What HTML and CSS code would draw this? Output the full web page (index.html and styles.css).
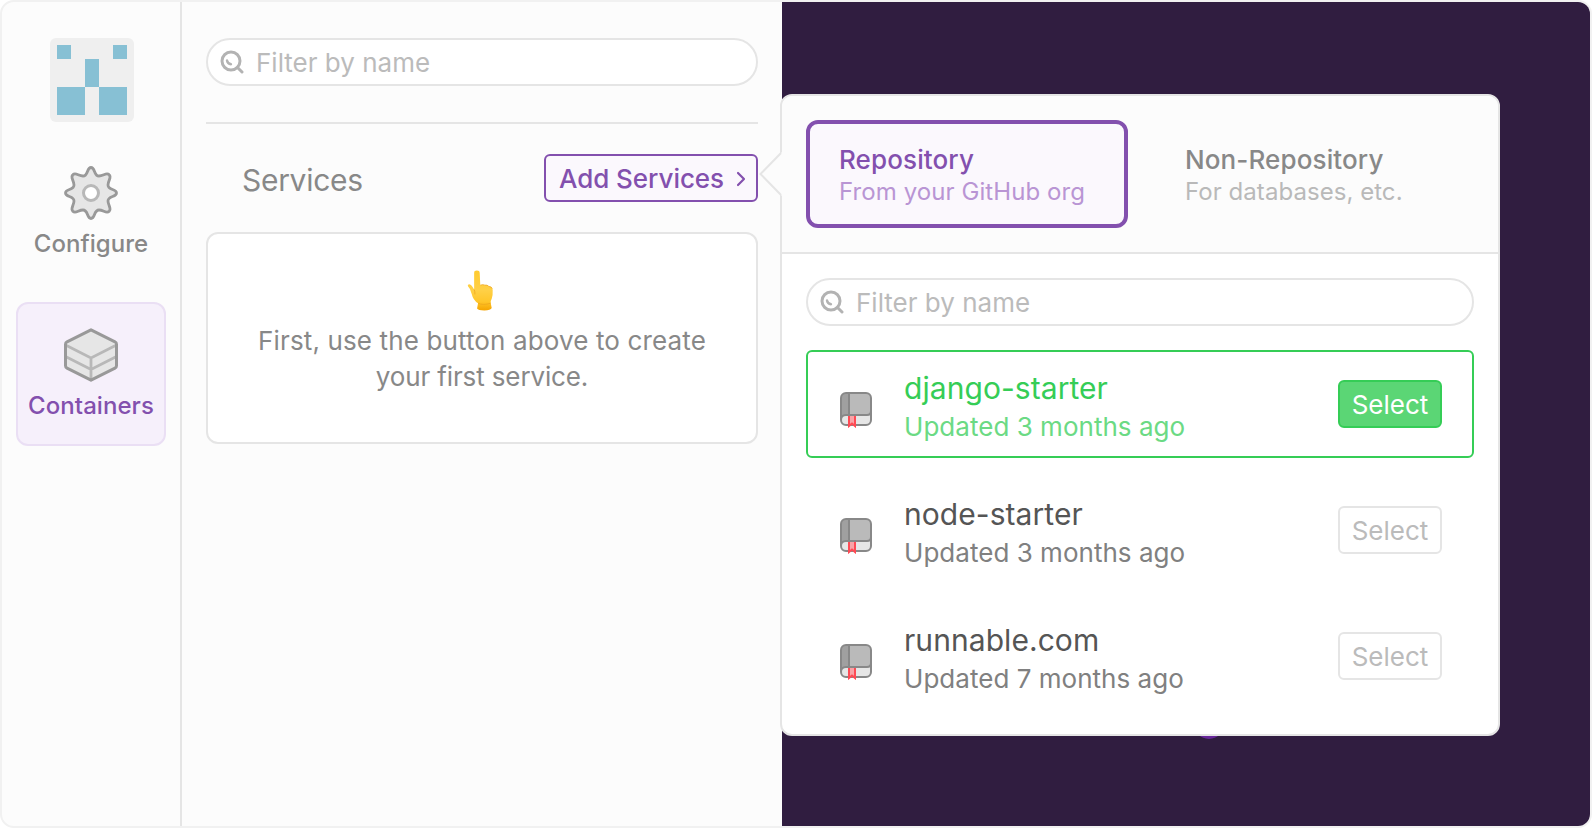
FILE: index.html
```html
<!DOCTYPE html>
<html lang="en">
<head>
<meta charset="utf-8">
<title>Containers</title>
<link rel="stylesheet" href="styles.css">
</head>
<body>
<svg class="defs" width="0" height="0" aria-hidden="true">
  <symbol id="search" viewBox="0 0 24 24">
    <circle cx="11" cy="11" r="9" fill="none" stroke="#b3b3b3" stroke-width="3"/>
    <path d="M17.5 17.5 22 22" fill="none" stroke="#b3b3b3" stroke-width="3" stroke-linecap="round"/>
    <path d="M7 10.5Q7.500 13.800 11 14.200" fill="none" stroke="#b3b3b3" stroke-width="2.400" stroke-linecap="round"/>
  </symbol>
  <symbol id="book" viewBox="0 0 32 36">
    <path d="M1 6a5 5 0 0 1 5-5h20a5 5 0 0 1 5 5v22a5 5 0 0 1-5 5H6a5 5 0 0 1-5-5z" fill="#e6e6e6"/>
    <path d="M1 28V6a5 5 0 0 1 5-5h3v22H6q-5 0-5 5z" fill="#a0a0a0"/>
    <path d="M9 1h17a5 5 0 0 1 5 5v13q0 4-4 4H9z" fill="#bababa"/>
    <path d="M1 28V6a5 5 0 0 1 5-5h20a5 5 0 0 1 5 5v22a5 5 0 0 1-5 5H6a5 5 0 0 1-5-5q0-5 5-5h21q4 0 4-4M9 1v22" fill="none" stroke="#888" stroke-width="2"/>
    <path d="M9 24h6v10l-3-2.500-3 2.500z" fill="#f9a3a7"/>
    <path d="M9 24v10l3-2.500 3 2.500V24" fill="none" stroke="#ff4a54" stroke-width="2"/>
  </symbol>
</svg>
<div class="app">
  <nav class="sidebar">
    <svg class="avatar" viewBox="0 0 84 84">
      <rect width="84" height="84" rx="6" fill="#efefef"/>
      <path fill="#87c0d4" d="M7 7h14v14H7zM63 7h14v14H63zM35 21h14v28H35zM7 49h28v28H7zM49 49h28v28H49z"/>
    </svg>
    <a class="nav-item">
      <svg class="nav-icon" viewBox="0 0 54 54">
        <path d="M27 1.500C31.500 1.500 29.500 10 35 10C39.500 10 42.500 6 45.200 8.800C48 11.500 44 14.500 44 19C44 24.500 52.500 22.500 52.500 27C52.500 31.500 44 29.500 44 35C44 39.500 48 42.500 45.200 45.200C42.500 48 39.500 44 35 44C29.500 44 31.500 52.500 27 52.500C22.500 52.500 24.500 44 19 44C14.500 44 11.500 48 8.800 45.200C6 42.500 10 39.500 10 35C10 29.500 1.500 31.500 1.500 27C1.500 22.500 10 24.500 10 19C10 14.500 6 11.500 8.800 8.800C11.500 6 14.500 10 19 10C24.500 10 22.500 1.500 27 1.500Z" fill="#e6e6e6" stroke="#999" stroke-width="2.800"/>
        <circle cx="27" cy="27" r="7.500" fill="#fff" stroke="#b8b8b8" stroke-width="3"/>
      </svg>
      <span>Configure</span>
    </a>
    <a class="nav-item active">
      <svg class="nav-icon" viewBox="0 0 54 54">
        <path d="M27 1.800 51 13.800Q52.500 14.600 52.500 16.200V37.800Q52.500 39.400 51 40.200L27 52.200 3 40.200Q1.500 39.400 1.500 37.800V16.200Q1.500 14.600 3 13.800Z" fill="#e6e6e6"/>
        <path d="M2.500 17.500 27 30 51.500 17.500M2.500 29 27 41.500 51.500 29M27 30V51" fill="none" stroke="#b8b8b8" stroke-width="2.800"/>
        <path d="M27 1.800 51 13.800Q52.500 14.600 52.500 16.200V37.800Q52.500 39.400 51 40.200L27 52.200 3 40.200Q1.500 39.400 1.500 37.800V16.200Q1.500 14.600 3 13.800Z" fill="none" stroke="#999" stroke-width="3" stroke-linejoin="round"/>
      </svg>
      <span>Containers</span>
    </a>
  </nav>
  <section class="panel">
    <div class="search"><svg class="search-icon"><use href="#search"/></svg><span>Filter by name</span></div>
    <hr class="rule">
    <header class="services">
      <h2 class="services-title">Services</h2>
      <button class="add"><span>Add Services</span><svg class="chevron" viewBox="0 0 10 16"><path d="M2 2 8 8 2 14" fill="none" stroke="#8350ae" stroke-width="2.200" stroke-linecap="round" stroke-linejoin="round"/></svg></button>
    </header>
    <div class="empty">
      <svg class="hand" viewBox="0 0 26 42">
        <defs><linearGradient id="skin" x1="0" y1="0" x2="0" y2="1"><stop offset="0" stop-color="#ffcb30"/><stop offset=".5" stop-color="#ffd046"/><stop offset=".78" stop-color="#ffc62a"/><stop offset="1" stop-color="#f5a400"/></linearGradient></defs>
        <path d="M7 3Q7 .5 9.800.5T12.700 3L13.300 15.500Q16 14.500 18 15.500 20.500 15 22 16.800 25.800 17 26 20.500 26.300 26 25 29.500 23.500 32 24 34L25 39Q24 41.500 17.500 41.500T10 39.500L11 34Q6 31 4.500 24.500 3.500 19.500.5 16.500.2 14.500 2 14.500 4.500 15 7 20Z" fill="url(#skin)"/>
        <path d="M7 20Q8 22 7.800 25M13.300 15.500Q16 14.500 18 15.500 20.500 15 22 16.800 25 17 25.500 19M11 34Q16 36.500 24 34" fill="none" stroke="#eda51c" stroke-width=".8"/>
      </svg>
      <p class="empty-text">First, use the button above to create<br><span class="tight">your first service.</span></p>
    </div>
  </section>
  <main class="canvas"><i class="node"></i></main>
  <div class="popover">
    <svg class="arrow" viewBox="0 0 23 44"><path d="M23 0 22 1 1.500 22 22 43 23 44Z" fill="#fcfcfc"/><path d="M22 1 1.500 22 22 43" fill="none" stroke="#e5e5e5" stroke-width="2"/></svg>
    <div class="tabs">
      <div class="tab selected"><b class="tab-title">Repository</b><span class="tab-sub">From your GitHub org</span></div>
      <div class="tab"><b class="tab-title">Non-Repository</b><span class="tab-sub">For databases, etc.</span></div>
    </div>
    <div class="repos">
      <div class="search"><svg class="search-icon"><use href="#search"/></svg><span>Filter by name</span></div>
      <ul class="list">
        <li class="repo current"><svg class="book"><use href="#book"/></svg><div class="repo-text"><span class="repo-name">django-starter</span><span class="repo-date">Updated 3 months ago</span></div><button class="select">Select</button></li>
        <li class="repo"><svg class="book"><use href="#book"/></svg><div class="repo-text"><span class="repo-name">node-starter</span><span class="repo-date">Updated 3 months ago</span></div><button class="select">Select</button></li>
        <li class="repo"><svg class="book"><use href="#book"/></svg><div class="repo-text"><span class="repo-name">runnable.com</span><span class="repo-date">Updated 7 months ago</span></div><button class="select">Select</button></li>
      </ul>
    </div>
  </div>
</div>
</body>
</html>
```

FILE: styles.css
```css
* { box-sizing: border-box; }
body { margin: 0; background: #fff; font-family: Inter, sans-serif; font-size: 26px; color: #888; }
button { font: inherit; margin: 0; }
.defs { position: absolute; }
.app { position: relative; display: flex; width: 1592px; height: 828px; border: 2px solid #f1f1f1; border-radius: 14px; overflow: hidden; background: #fcfcfc; }

.sidebar { width: 180px; border-right: 2px solid #e5e5e5; display: flex; flex-direction: column; align-items: center; padding-top: 36px; }
.avatar { width: 84px; height: 84px; margin-left: 2px; }
.nav-item { width: 150px; height: 144px; margin-top: 18px; border: 2px solid transparent; border-radius: 12px; display: flex; flex-direction: column; align-items: center; padding-top: 24px; font-size: 24px; font-weight: 500; line-height: 30px; letter-spacing: .06px; }
.nav-icon { width: 54px; height: 54px; margin-bottom: 9px; flex: none; }
.nav-item.active { background: #f6f0fb; border-color: #eadff4; color: #8350ae; }

.panel { width: 600px; padding: 36px 24px 0; }
.search { display: flex; align-items: center; height: 48px; border: 2px solid #e5e5e5; border-radius: 24px; background: #fff; color: #bbb; padding-left: 12px; line-height: 32px; letter-spacing: 0; }
.search span { padding-top: 2px; }
.search-icon { width: 24px; height: 24px; margin-right: 12px; }
.rule { border: 0; height: 2px; background: #e5e5e5; margin: 36px 0 30px; }
.services { display: flex; justify-content: space-between; height: 48px; padding-left: 36px; }
.services-title { margin: 0; font-size: 30px; font-weight: 400; line-height: 52px; letter-spacing: -.3px; }
.add { display: flex; align-items: center; width: 214px; height: 48px; border: 2px solid #8350ae; border-radius: 6px; background: #fbf8fd; color: #8350ae; font-weight: 500; padding: 0 0 0 13px; letter-spacing: -.05px; line-height: 42px; white-space: nowrap; }
.add span { padding-top: 2px; }
.chevron { width: 10px; height: 16px; margin: 2px 0 0 12px; }
.empty { margin-top: 30px; height: 212px; border: 2px solid #e5e5e5; border-radius: 12px; background: #fff; text-align: center; }
.hand { display: block; width: 26px; height: 41px; margin: 36px 0 12px 259px; }
.empty-text { margin: 0; line-height: 36px; letter-spacing: .13px; white-space: nowrap; }
.tight { letter-spacing: -.13px; }

.canvas { flex: 1; background: #301d40; position: relative; }
.node { position: absolute; left: 412px; top: 707px; width: 30px; height: 30px; border-radius: 50%; background: #67279a; }

.popover { position: absolute; left: 778px; top: 92px; width: 720px; height: 642px; border: 2px solid #e5e5e5; border-radius: 12px; background: #fff; }
.arrow { position: absolute; left: -23px; top: 56px; width: 23px; height: 44px; }
.tabs { display: flex; gap: 24px; height: 158px; padding: 24px; background: #fcfcfc; border-bottom: 2px solid #e5e5e5; border-radius: 10px 10px 0 0; }
.tab { flex: 1 1 0; height: 108px; padding: 19px 0 0 29px; border: 4px solid transparent; border-radius: 12px; white-space: nowrap; }
.tab.selected { border-color: #8350ae; background: #fbf8fd; color: #8350ae; }
.tab-title, .tab-sub { display: block; line-height: 33px; }
.tab-title { font-weight: 500; letter-spacing: .12px; }
.tab-sub { font-size: 24px; line-height: 32px; letter-spacing: .05px; color: #b9b9b9; }
.selected .tab-sub { color: #b995d4; letter-spacing: .08px; }
.repos { padding: 24px; }
.list { list-style: none; margin: 24px 0 0; padding: 0; display: flex; flex-direction: column; gap: 18px; }
.repo { display: flex; align-items: center; height: 108px; border: 2px solid transparent; border-radius: 6px; padding: 0 30px 0 32px; }
.book { width: 32px; height: 36px; margin-top: 12px; }
.repo-text { flex: 1; padding: 5px 0 0 32px; }
.repo-name, .repo-date { display: block; line-height: 38px; }
.repo-name { font-size: 30px; color: #555; letter-spacing: .06px; line-height: 40px; }
.repo-date { color: #808080; letter-spacing: .03px; }
.current { border-color: #35cd56; }
.current .repo-name { color: #35cd56; }
.current .repo-date { color: #6bda84; }
.select { width: 104px; height: 48px; border: 2px solid #e5e5e5; border-radius: 6px; background: #fff; color: #bbb; padding: 2px 0 0; line-height: 42px; }
.current .select { background: #5bd675; border-color: #35cd56; color: #fff; }
```
